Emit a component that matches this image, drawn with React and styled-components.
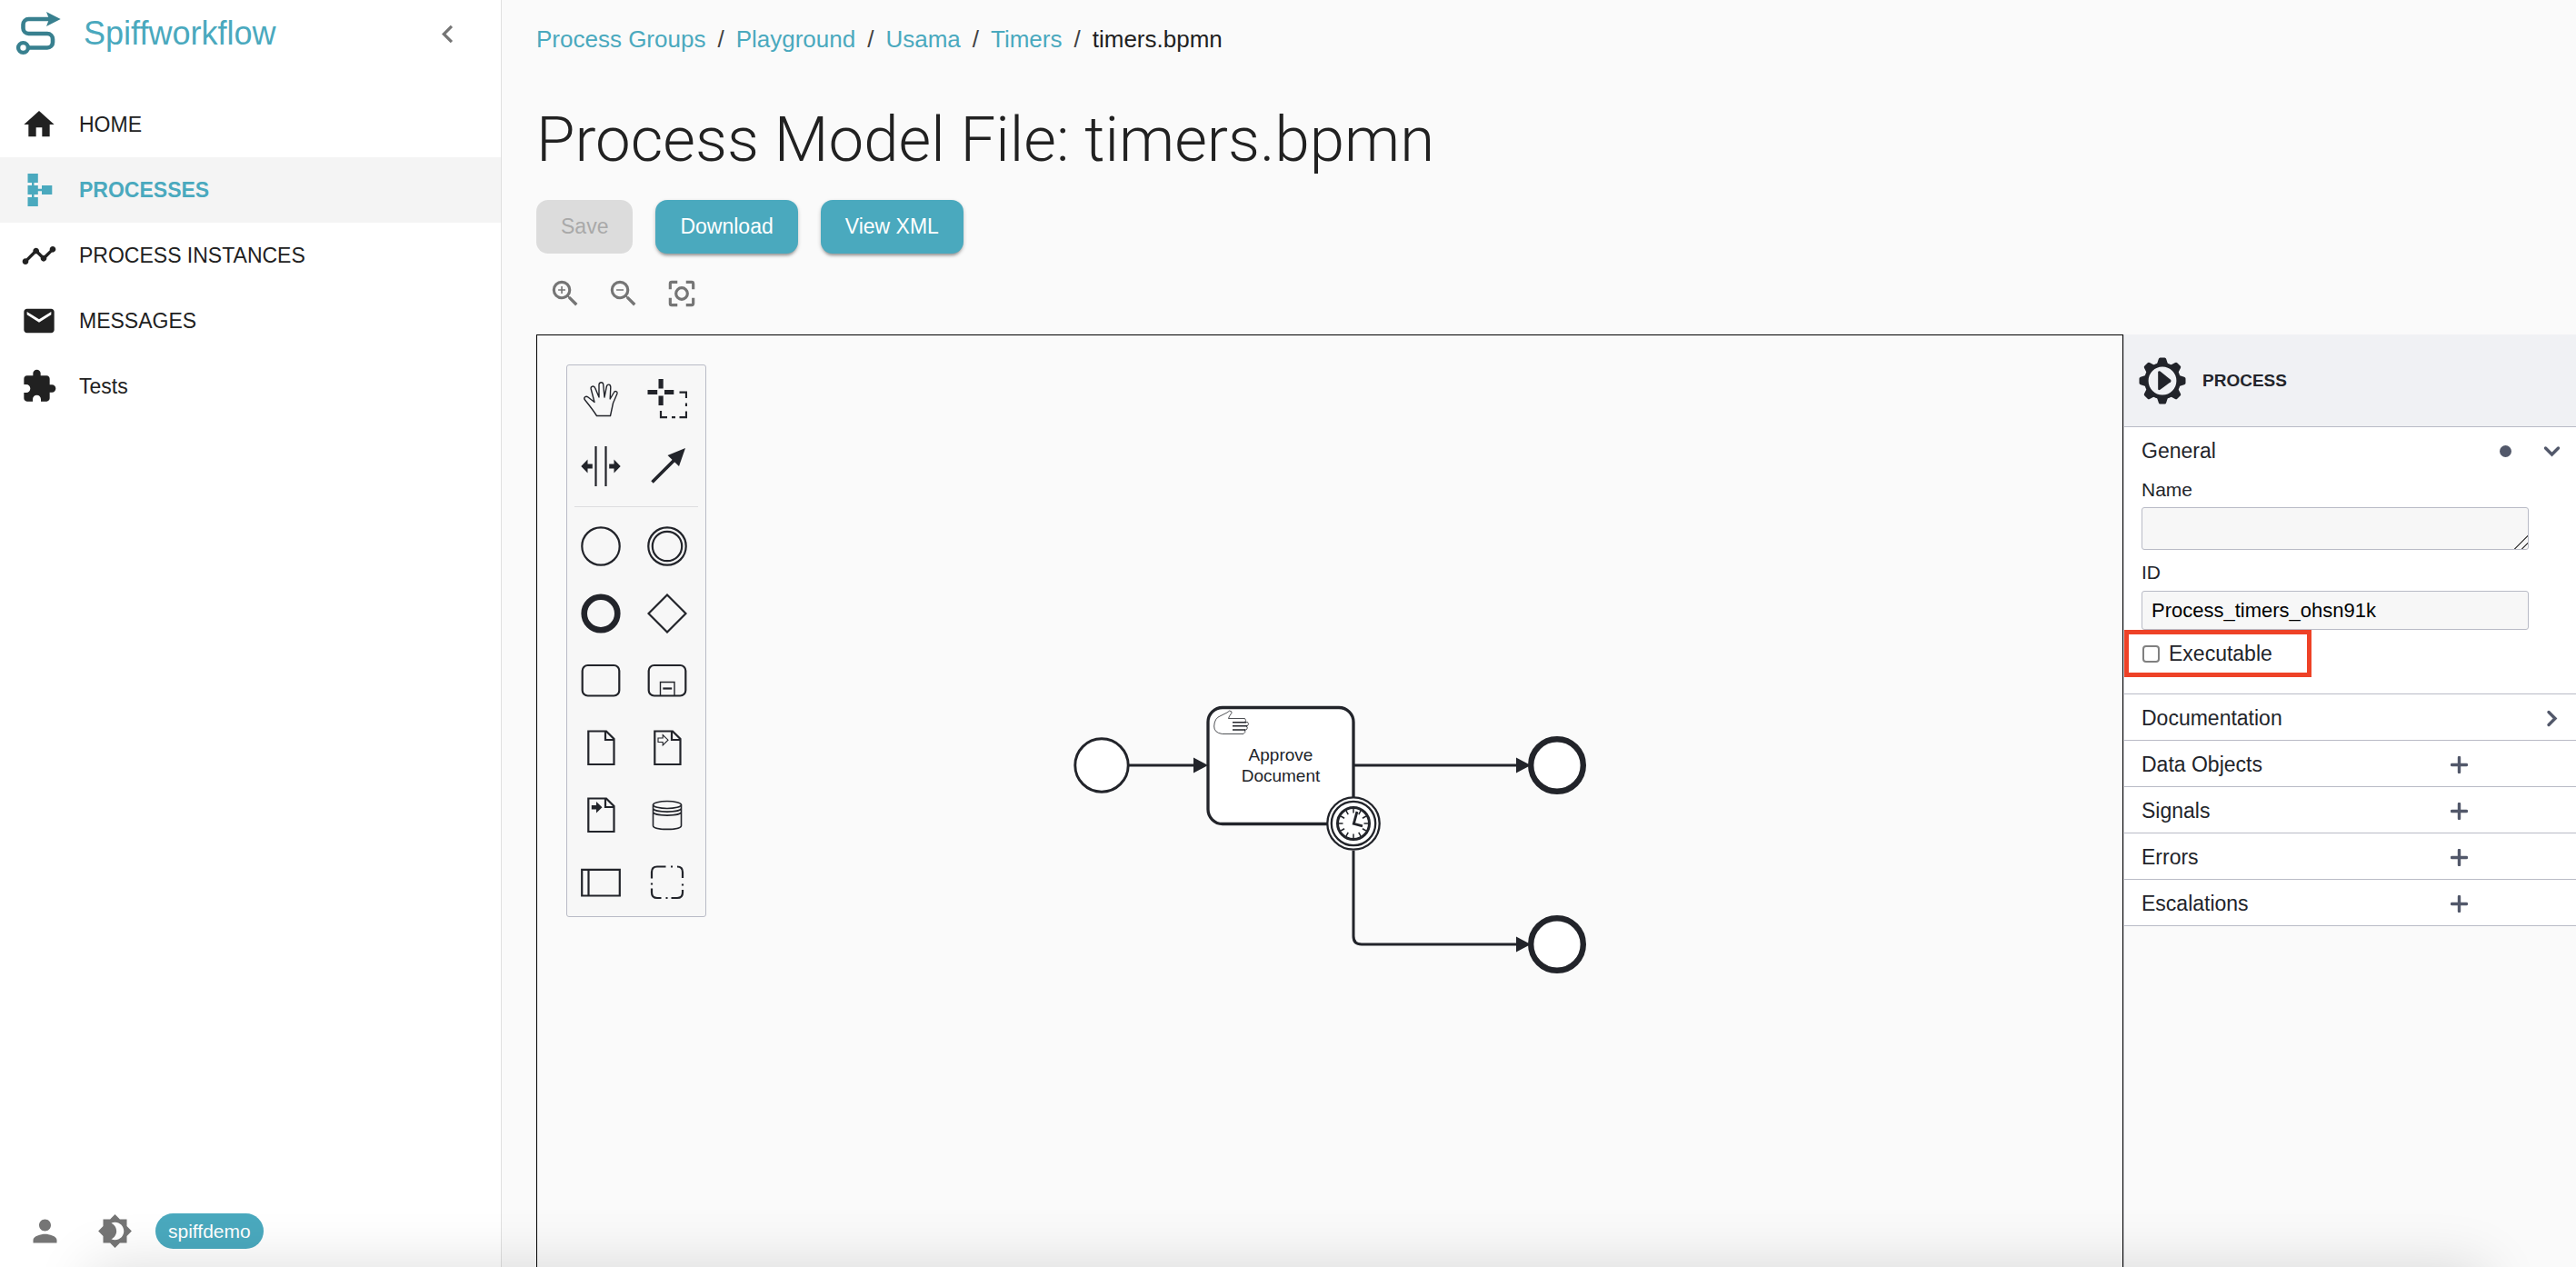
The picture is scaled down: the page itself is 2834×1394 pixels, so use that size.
import React from "react";
import styled, { createGlobalStyle } from "styled-components";
import {
  MdHome,
  MdTimeline,
  MdEmail,
  MdExtension,
  MdPerson,
  MdBrightness4,
  MdZoomIn,
  MdZoomOut,
  MdChevronLeft,
} from "react-icons/md";

const ink = "#22242a";
const teal = "#4aa9be";
const line = "#b9bbc6";
const slate = "#52586a";

const GlobalStyle = createGlobalStyle`
  * { box-sizing: border-box; }
  body {
    margin: 0;
    background: #fafafa;
    color: #212121;
    font-family: "Liberation Sans", Arial, Helvetica, sans-serif;
  }
  button { font: inherit; color: inherit; border: 0; background: none; padding: 0; cursor: pointer; }
  a { color: inherit; text-decoration: none; }
  svg { display: block; }
`;

const Page = styled.div`
  display: grid;
  grid-template-columns: 552px minmax(0, 1fr);
  min-height: 100vh;
`;

/* Sidebar */
const Sidebar = styled.aside`
  display: flex;
  flex-direction: column;
  background: #fff;
  border-right: 1px solid #e0e0e0;
`;
const Brand = styled.header`
  display: flex;
  align-items: center;
  height: 74px;
  padding: 0 39px 0 16px;
`;
const BrandName = styled.a`
  flex: 1;
  margin-left: 22px;
  font-size: 36px;
  line-height: 40px;
  color: ${teal};
`;
const CollapseButton = styled.button`
  color: #757575;
`;
const Nav = styled.nav`
  flex: 1;
  margin-top: 27px;
`;
const NavLink = styled.a`
  display: flex;
  align-items: center;
  gap: 24px;
  height: 72px;
  padding-left: 23px;
  font-size: 23px;
  font-weight: ${(p) => (p.$active ? 700 : 400)};
  color: ${(p) => (p.$active ? teal : "#212121")};
  background: ${(p) => (p.$active ? "#f4f4f4" : "transparent")};
`;
const SidebarFooter = styled.footer`
  display: flex;
  align-items: center;
  height: 80px;
  padding-left: 30px;
  color: #757575;
`;
const FooterButton = styled.button`
  margin-right: ${(p) => (p.$last ? 25 : 38)}px;
`;
const Chip = styled.span`
  padding: 0 14px;
  border-radius: 20px;
  background: ${teal};
  color: #fff;
  font-size: 21px;
  line-height: 39px;
`;

/* Main column */
const Main = styled.main`
  display: flex;
  flex-direction: column;
  padding-left: 38px;
`;
const Crumbs = styled.ol`
  display: flex;
  gap: 13px;
  margin: 26px 0 0;
  padding: 0;
  list-style: none;
  font-size: 26px;
  line-height: 34px;
`;
const Crumb = styled.li`
  display: flex;
  gap: 13px;
  &:not(:last-child)::after { content: "/"; color: #424242; }
`;
const CrumbLink = styled.a`
  color: ${teal};
`;
const Title = styled.h1`
  margin: 54px 0 0;
  font-family: Roboto, "Liberation Sans", sans-serif;
  font-size: 69px;
  font-weight: 300;
  line-height: 80px;
`;
const Actions = styled.div`
  display: flex;
  gap: 25px;
  margin-top: 26px;
`;
const ActionButton = styled.button`
  height: 59px;
  padding: 0 27px;
  border-radius: 13px;
  font-size: 23px;
  color: #fff;
  background: ${teal};
  box-shadow: 0 4px 3px -2px rgba(0, 0, 0, 0.25), 0 2px 4px rgba(0, 0, 0, 0.22);
  &:disabled {
    color: #a9a9a9;
    background: #dcdcdc;
    box-shadow: none;
    cursor: default;
  }
`;
const ZoomBar = styled.div`
  display: flex;
  margin: 12px 0 13px;
  color: #757575;
`;
const ZoomButton = styled.button`
  padding: 13px;
`;
const Editor = styled.section`
  flex: 1;
  display: grid;
  grid-template-columns: minmax(0, 1fr) 498px;
`;
const Canvas = styled.div`
  position: relative;
  overflow: hidden;
  border: 1px solid #000;
  border-bottom: 0;
`;
const DiagramLayer = styled.svg`
  position: absolute;
  inset: 0;
  width: 100%;
  height: 100%;
  fill: #fff;
  stroke: ${ink};
`;
const TaskLabel = styled.text`
  font-size: 19px;
  text-anchor: middle;
  fill: ${ink};
  stroke: none;
`;

/* Palette floating on the canvas */
const Palette = styled.div`
  position: absolute;
  left: 32px;
  top: 32px;
  width: 154px;
  padding-right: 5px;
  border: 1px solid ${line};
  border-radius: 3px;
  background: #f7f7f7;
`;
const ToolGroup = styled.div`
  display: grid;
  grid-template-columns: repeat(2, 1fr);
`;
const Tool = styled.button`
  display: grid;
  place-items: center;
  height: 74px;
`;
const ToolDivider = styled.hr`
  margin: 7px 3px 6px 8px;
  border: 0;
  border-top: 1px solid #dddddf;
`;
const ToolIcon = styled.svg`
  width: 44px;
  height: 44px;
  fill: none;
  stroke: ${ink};
  stroke-width: 2.2;
  .solid { fill: ${ink}; stroke: none; }
`;

/* Properties panel */
const Panel = styled.aside`
  border-left: 1px solid #d8d8dc;
  color: ${ink};
`;
const PanelHeader = styled.header`
  display: flex;
  align-items: center;
  gap: 18px;
  height: 102px;
  padding-left: 16px;
  background: #f0f1f4;
  border-bottom: 1px solid ${line};
`;
const PanelTitle = styled.h2`
  margin: 0;
  font-size: 19px;
`;
const Group = styled.section`
  background: #fff;
  border-bottom: 1px solid ${line};
`;
const GroupHeader = styled.button`
  display: flex;
  align-items: center;
  width: 100%;
  height: ${(p) => (p.$tall ? 53 : 50)}px;
  padding: ${(p) => (p.$tall ? 0 : 2)}px 17px 0 19px;
  font-size: 23px;
  text-align: left;
`;
const GroupName = styled.span`
  flex: 1;
`;
const GroupIcon = styled.svg`
  width: 19px;
  height: 19px;
  fill: none;
  stroke: ${slate};
  stroke-width: 3.4;
  stroke-linecap: round;
  margin-right: ${(p) => p.$inset || 0}px;
`;
const Dot = styled.i`
  width: 13px;
  height: 13px;
  margin-right: 35px;
  border-radius: 50%;
  background: ${slate};
`;
const Fields = styled.div`
  display: flex;
  flex-direction: column;
  padding: 0 52px 18px 19px;
`;
const FieldLabel = styled.label`
  font-size: 21px;
  line-height: 28px;
  padding-bottom: ${(p) => (p.$first ? 5 : 6)}px;
  padding-top: ${(p) => (p.$first ? 2 : 11)}px;
`;
const fieldBox = `
  display: block;
  width: 100%;
  border: 1px solid ${line};
  border-radius: 3px;
  background: #f7f7f7;
  color: #000;
  font-family: inherit;
  font-size: 22px;
  padding: 4px 10px;
  outline: 0;
`;
const NameArea = styled.textarea`
  ${fieldBox}
  height: 47px;
  resize: vertical;
  &::-webkit-resizer {
    background: linear-gradient(
      135deg,
      transparent 48%, #555 48%, #555 55%,
      transparent 55%, transparent 74%,
      #555 74%, #555 81%, transparent 81%
    );
  }
`;
const IdInput = styled.input`
  ${fieldBox}
  height: 43px;
`;
const Highlight = styled.div`
  align-self: flex-start;
  width: 206px;
  margin-left: -19px;
  border: 5px solid #ee4227;
  padding-left: 15px;
`;
const CheckLabel = styled.label`
  display: flex;
  align-items: center;
  gap: 10px;
  height: 42px;
  font-size: 23px;
`;
const CheckBox = styled.input`
  appearance: none;
  width: 19px;
  height: 19px;
  margin: 0;
  border: 2px solid #808080;
  border-radius: 4px;
  background: #fff;
  &:checked { background: ${slate}; }
`;

/* Soft shade rising from the lower edge of the window */
const BottomShade = styled.div`
  position: fixed;
  left: 100px;
  right: 100px;
  bottom: -80px;
  height: 80px;
  box-shadow: 0 0 64px rgba(0, 0, 0, 0.14);
  pointer-events: none;
`;

const Logo = () => (
  <svg width="54" height="54" viewBox="16 10 54 54" fill="none" stroke="#38808f" strokeWidth="4.6">
    <path d="M56 21H31.5a6 6 0 0 0-6 6v4a6 6 0 0 0 6 6H52a6 6 0 0 1 6 6v3.500a6 6 0 0 1-6 6H32" />
    <circle cx="25.500" cy="52.500" r="5.400" strokeWidth="4.400" />
    <path d="M51 13L66.700 21L51 29L54 21Z" fill="#38808f" stroke="none" />
  </svg>
);

const ProcessesIcon = () => (
  <svg width="40" height="40" viewBox="23 189 40 40" fill={teal}>
    <path d="M30.500 191h11.300v10H30.500zM30.500 204h11.300v10H30.500zM30.500 217h11.300v10H30.500zM46 204h11.300v10H46z" />
    <path d="M35 200h2.500v18H35zM41 207.800h6v2.500h-6z" />
  </svg>
);

const FitIcon = () => (
  <svg width="38" height="38" viewBox="0 0 24 24" fill="none" stroke="currentColor" strokeWidth="2">
    <path d="M4 9V5a1 1 0 0 1 1-1h4M15 4h4a1 1 0 0 1 1 1v4M20 15v4a1 1 0 0 1-1 1h-4M9 20H5a1 1 0 0 1-1-1v-4" />
    <circle cx="12" cy="12" r="4" />
  </svg>
);

const GearIcon = () => (
  <svg width="52" height="52" viewBox="-26 -26 52 52" fill={ink}>
    {[0, 45, 90, 135, 180, 225, 270, 315].map((angle) => (
      <path
        key={angle}
        d="M-6.500 -17L-4.200 -24Q-3.800 -25.500 -2.500 -25.500H2.500Q3.800 -25.500 4.200 -24L6.500 -17Z"
        transform={`rotate(${angle})`}
      />
    ))}
    <circle r="17.700" fill="#f0f1f4" stroke={ink} strokeWidth="4.600" />
    <path d="M-4.800 -9.500Q-4.500 -11.500 -2.500 -10.500L9 -1.200Q10.200 0 9 1.200L-2.500 9.800Q-4.500 11 -4.800 9Z" />
  </svg>
);

const page = "M8.300 3.500H28L36.500 12V40H8.300ZM27 3.500V13H36.500";

const tools = [
  {
    name: "Activate hand tool",
    art: (
      <path
        strokeWidth="1.400"
        strokeLinejoin="round"
        d="M17.500 40.500H32.500L35.500 26.500L40 16C40.500 13.500 37.500 12.500 36.300 15L32.200 22L32.800 9C32.800 5.500 29 5 28.300 8.500L26 20L24.700 6C24.500 3 20.500 3 20 6L20 20L15.800 10C14.500 6.500 10.500 8 11.200 11L15 25.500L8 20C5.500 18 2.500 20.500 4.500 23C9 28.500 14 35 17.500 40.500Z"
      />
    ),
  },
  {
    name: "Activate lasso tool",
    art: (
      <>
        <path className="solid" d="M12.500 0h5.200v10.500h-5.200zM12.500 18.500h5.200v10.500h-5.200zM.5 12h10.700v5H.5zM19 12h10.300v5H19z" />
        <path d="M35.500 14.700H43V21M43 26.500V30M43 35.500V42.200H35.500M31 42.200H27M22 42.200H15V35" />
      </>
    ),
  },
  {
    name: "Activate create/remove space tool",
    art: (
      <>
        <path d="M16.500 0V44M27.500 0V44" />
        <path className="solid" d="M.3 22L7.500 14.500V19.500H12.800V24.500H7.500V29.500ZM43.700 22L36.500 14.500V19.500H31.200V24.500H36.500V29.500Z" />
      </>
    ),
  },
  {
    name: "Activate global connect tool",
    art: (
      <>
        <path strokeWidth="3.600" d="M5.500 39.500L32 13" />
        <path className="solid" d="M42 2L35 22L22.500 10Z" />
      </>
    ),
  },
  { name: "Create start event", art: <circle cx="22" cy="22" r="20.700" /> },
  {
    name: "Create intermediate event",
    art: (
      <>
        <circle cx="22" cy="22" r="20.700" />
        <circle cx="22" cy="22" r="16.200" />
      </>
    ),
  },
  { name: "Create end event", art: <circle cx="22" cy="22" r="18.300" strokeWidth="6.600" /> },
  { name: "Create gateway", art: <path d="M22 1.500L42.500 22L22 42.500L1.500 22Z" /> },
  { name: "Create task", art: <rect x="1.700" y="5" width="40.600" height="33.500" rx="6" /> },
  {
    name: "Create expanded sub-process",
    art: (
      <>
        <rect x="1.700" y="5" width="40.600" height="33.500" rx="6" />
        <path strokeWidth="1.400" d="M14.500 38V23.500H30V38" />
        <path d="M17.300 30.500H27.200" />
      </>
    ),
  },
  { name: "Create data object", art: <path d={page} /> },
  {
    name: "Create data input",
    art: (
      <>
        <path d={page} />
        <path strokeWidth="1.100" d="M12 11H17.200V7.500L23 13.200L17.200 19V15.500H12Z" />
      </>
    ),
  },
  {
    name: "Create data output",
    art: (
      <>
        <path d={page} />
        <path className="solid" d="M11.800 11H17V7L23.500 13.200L17 19.500V15.500H11.800Z" />
      </>
    ),
  },
  {
    name: "Create data store",
    art: (
      <g strokeWidth="1.600">
        <ellipse cx="22" cy="10.500" rx="15.500" ry="4" />
        <path d="M6.500 10.500V33.500C6.500 38.700 37.500 38.700 37.500 33.500V10.500M6.500 14C6.500 19.500 37.500 19.500 37.500 14M6.500 18C6.500 23.500 37.500 23.500 37.500 18" />
      </g>
    ),
  },
  {
    name: "Create pool/participant",
    art: <path d="M1.200 7.800H42.800V36.500H1.200ZM8.500 7.800V36.500" />,
  },
  {
    name: "Create group",
    art: (
      <path d="M5 17.500V10.500Q5 4.500 11 4.500H20.500M26 4.500H28M33 4.500Q39 4.500 39 10.500V17M39 23.500V25.500M39 30V33Q39 39 33 39H26.500M22.500 39H20.500M15.500 39H11Q5 39 5 33V28.500M5 24.500V22.500" />
    ),
  },
];

const renderTools = (list) =>
  list.map((tool) => (
    <Tool key={tool.name} type="button" aria-label={tool.name}>
      <ToolIcon viewBox="0 0 44 44">{tool.art}</ToolIcon>
    </Tool>
  ));

const ArrowHead = ({ x, y }) => (
  <path d={`M${x - 16} ${y - 8.5}L${x} ${y}L${x - 16} ${y + 8.5}Z`} fill={ink} stroke="none" />
);

const Diagram = () => (
  <DiagramLayer role="img" aria-label="BPMN diagram">
    <g fill="none" strokeWidth="3.200">
      <path d="M650 473H733M898 473H1088" />
      <path d="M898 567V661Q898 670 907 670H1088" strokeWidth="3" />
    </g>
    <circle cx="621" cy="473" r="29.200" strokeWidth="2.900" />
    <rect x="738" y="409.500" width="160" height="128" rx="16" strokeWidth="3.300" />
    <ArrowHead x={738} y={473} />
    <ArrowHead x={1093} y={473} />
    <ArrowHead x={1093} y={670} />
    <g transform="translate(744 413)" strokeWidth="0.800">
      <path d="M.7 17Q1 8 8 5.500L15 2Q18 -1.300 19.700 .8L20 2.500Q17 6 16.500 8.500H34.500Q36.500 10.500 34.800 12.500H37.500Q40 14.500 37 17H36.500Q38.500 19 36 21H34.500Q36 23.500 33 25.500H9.500Q.5 24 .7 17Z" />
      <path d="M21 12.700H36M21 16.800H37M21 21H35" strokeWidth="1.500" />
    </g>
    <TaskLabel x="818" y="468">Approve</TaskLabel>
    <TaskLabel x="818" y="491">Document</TaskLabel>
    <g transform="translate(898 537)">
      <circle r="28.700" strokeWidth="2.300" />
      <circle r="24.200" strokeWidth="2.300" />
      <circle r="17.500" strokeWidth="3" />
      {Array.from({ length: 12 }, (_, i) => (
        <path key={i} d="M0 -16V-11.500" strokeWidth="1.500" transform={`rotate(${i * 30})`} />
      ))}
      <path d="M4 -13L.3 .3L10 2.800" fill="none" strokeWidth="2.800" />
    </g>
    <circle cx="1122" cy="473" r="28.800" strokeWidth="6.400" />
    <circle cx="1122" cy="670" r="28.800" strokeWidth="6.400" />
  </DiagramLayer>
);

const navItems = [
  { label: "HOME", icon: <MdHome size={40} /> },
  { label: "PROCESSES", icon: <ProcessesIcon />, active: true },
  { label: "PROCESS INSTANCES", icon: <MdTimeline size={40} /> },
  { label: "MESSAGES", icon: <MdEmail size={40} /> },
  { label: "Tests", icon: <MdExtension size={40} /> },
];

const crumbs = ["Process Groups", "Playground", "Usama", "Timers"];
const addGroups = ["Data Objects", "Signals", "Errors", "Escalations"];

export default function App() {
  return (
    <>
      <GlobalStyle />
      <Page>
        <Sidebar>
          <Brand>
            <Logo />
            <BrandName href="#">Spiffworkflow</BrandName>
            <CollapseButton type="button" aria-label="Collapse navigation">
              <MdChevronLeft size={39} />
            </CollapseButton>
          </Brand>
          <Nav>
            {navItems.map((item) => (
              <NavLink key={item.label} href="#" $active={item.active}>
                {item.icon}
                {item.label}
              </NavLink>
            ))}
          </Nav>
          <SidebarFooter>
            <FooterButton type="button" aria-label="Account">
              <MdPerson size={39} />
            </FooterButton>
            <FooterButton type="button" aria-label="Toggle dark mode" $last>
              <MdBrightness4 size={39} />
            </FooterButton>
            <Chip>spiffdemo</Chip>
          </SidebarFooter>
        </Sidebar>

        <Main>
          <nav aria-label="Breadcrumb">
            <Crumbs>
              {crumbs.map((name) => (
                <Crumb key={name}>
                  <CrumbLink href="#">{name}</CrumbLink>
                </Crumb>
              ))}
              <Crumb>timers.bpmn</Crumb>
            </Crumbs>
          </nav>
          <Title>Process Model File: timers.bpmn</Title>
          <Actions>
            <ActionButton type="button" disabled>Save</ActionButton>
            <ActionButton type="button">Download</ActionButton>
            <ActionButton type="button">View XML</ActionButton>
          </Actions>
          <ZoomBar>
            <ZoomButton type="button" aria-label="Zoom in"><MdZoomIn size={38} /></ZoomButton>
            <ZoomButton type="button" aria-label="Zoom out"><MdZoomOut size={38} /></ZoomButton>
            <ZoomButton type="button" aria-label="Fit to view"><FitIcon /></ZoomButton>
          </ZoomBar>

          <Editor>
            <Canvas>
              <Diagram />
              <Palette>
                <ToolGroup>{renderTools(tools.slice(0, 4))}</ToolGroup>
                <ToolDivider />
                <ToolGroup>{renderTools(tools.slice(4))}</ToolGroup>
              </Palette>
            </Canvas>

            <Panel>
              <PanelHeader>
                <GearIcon />
                <PanelTitle>PROCESS</PanelTitle>
              </PanelHeader>
              <Group>
                <GroupHeader type="button" $tall>
                  <GroupName>General</GroupName>
                  <Dot />
                  <GroupIcon viewBox="0 0 19 19"><path d="M2.500 6L9.500 13L16.500 6" /></GroupIcon>
                </GroupHeader>
                <Fields>
                  <FieldLabel htmlFor="process-name" $first>Name</FieldLabel>
                  <NameArea id="process-name" rows={1} />
                  <FieldLabel htmlFor="process-id">ID</FieldLabel>
                  <IdInput id="process-id" defaultValue="Process_timers_ohsn91k" />
                  <Highlight>
                    <CheckLabel>
                      <CheckBox type="checkbox" />
                      Executable
                    </CheckLabel>
                  </Highlight>
                </Fields>
              </Group>
              <Group>
                <GroupHeader type="button">
                  <GroupName>Documentation</GroupName>
                  <GroupIcon viewBox="0 0 19 19"><path d="M6 2.500L13 9.500L6 16.500" /></GroupIcon>
                </GroupHeader>
              </Group>
              {addGroups.map((name) => (
                <Group key={name}>
                  <GroupHeader type="button">
                    <GroupName>{name}</GroupName>
                    <GroupIcon viewBox="0 0 19 19" $inset={102}>
                      <path d="M9.500 1.500V17.500M1.500 9.500H17.500" />
                    </GroupIcon>
                  </GroupHeader>
                </Group>
              ))}
            </Panel>
          </Editor>
        </Main>
      </Page>
      <BottomShade />
    </>
  );
}
